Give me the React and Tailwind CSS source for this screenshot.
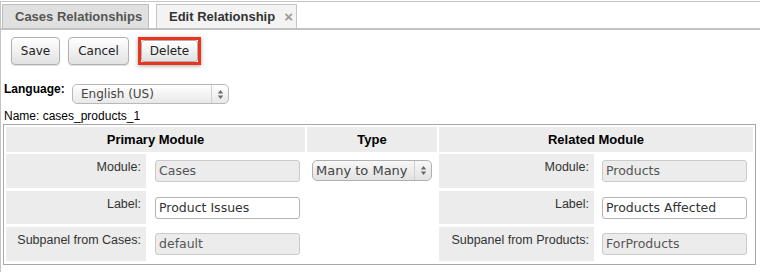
const sans = "font-['Liberation_Sans',Arial,sans-serif]";
const ui = "font-['DejaVu_Sans',sans-serif]";

function Arrows() {
  return (
    <svg width="7" height="11" viewBox="0 0 7 11">
      <path d="M3.5 1 L6.2 4.4 H0.8 Z M3.5 10 L6.2 6.6 H0.8 Z" fill="#6a6a6a" />
    </svg>
  );
}

function Btn({ w, children }) {
  return (
    <div
      className={`${w} h-[28px] rounded-[4px] border border-[#b0b0b0] bg-linear-to-b from-white to-[#e2e2e2] shadow-[0_1px_1px_rgba(0,0,0,0.12)] text-[12px] text-[#222] ${ui} flex items-center justify-center`}
    >
      {children}
    </div>
  );
}

function Label({ children }) {
  return (
    <div className="bg-[#ececec] text-right pr-[5px] pt-[6px] text-[12.5px] leading-[15px] text-[#333]">
      {children}
    </div>
  );
}

function Field({ value, disabled, left }) {
  return (
    <div className="bg-white">
      <div
        className={`${left} mt-[6px] w-[145px] h-[22px] rounded-[3px] border ${
          disabled ? "bg-[#ececec] border-[#cacaca] text-[#555]" : "bg-white border-[#b4b4b4] text-[#333]"
        } ${ui} text-[12.5px] pl-[3px] flex items-center`}
      >
        {value}
      </div>
    </div>
  );
}

const cols = "grid grid-cols-[140px_157px_130px_155px_157px] gap-x-[2px]";

export default function App() {
  return (
    <div className="w-[760px] h-[272px] bg-white pt-px overflow-hidden">
      <div className={`h-[271px] border-t border-l border-[#c4c4c4] ${sans}`}>
        {/* tabs */}
        <div className="h-[28px] flex items-end gap-[7px] pl-px border-b-2 border-[#c2c2c2]">
          <div className="w-[147px] h-[24px] border border-b-0 border-[#bdbdbd] bg-[#e0e0e0] flex items-center pl-[12px] text-[13px] font-bold text-[#555]">
            Cases Relationships
          </div>
          <div className="w-[141px] h-[24px] border border-b-0 border-[#c4c4c4] bg-[#f3f3f3] flex items-center pl-[12px] gap-[9px] text-[13px] font-bold text-[#333]">
            <span>Edit Relationship</span>
            <span className="text-[15px] font-bold text-[#999] leading-none">×</span>
          </div>
        </div>

        {/* buttons */}
        <div className="mt-[7px] ml-[10px] flex items-start">
          <Btn w="w-[49px]">Save</Btn>
          <div className="ml-[8px]">
            <Btn w="w-[61px]">Cancel</Btn>
          </div>
          <div className="ml-[9px] w-[63px] h-[28px] border-[3px] border-[#ea3420] shadow-[0_1px_4px_rgba(0,0,0,0.35)]">
            <div
              className={`w-[57px] h-[22px] rounded-[3px] border border-[#b0b0b0] bg-linear-to-b from-white to-[#e2e2e2] text-[12px] text-[#222] ${ui} flex items-center justify-center`}
            >
              Delete
            </div>
          </div>
        </div>

        {/* language */}
        <div className="mt-[17px] ml-[3px] flex items-start">
          <div className="w-[68px] text-[12px] leading-[14px] font-bold text-black">Language:</div>
          <div className="mt-[2px] w-[157px] h-[20px] rounded-[5px] border border-[#b8b8b8] bg-linear-to-b from-white to-[#e8e8e8] flex">
            <div className={`flex-1 pl-[8px] ${ui} text-[12px] text-[#444] flex items-center`}>English (US)</div>
            <div className="w-[17px] border-l border-[#d0d0d0] flex items-center justify-center">
              <Arrows />
            </div>
          </div>
        </div>

        {/* name */}
        <div className="mt-[5px] ml-[3px] text-[12px] leading-[14px] text-black">Name: cases_products_1</div>

        {/* table */}
        <div className="mt-px ml-[2px] w-[753px] border border-[#a8a8a8] p-[2px] pb-[3px] flex flex-col">
          <div className={`${cols} h-[25px] text-[13px] font-bold text-black`}>
            <div className="col-span-2 bg-[#ececec] flex items-center justify-center">Primary Module</div>
            <div className="bg-[#ececec] flex items-center justify-center">Type</div>
            <div className="col-span-2 bg-[#ececec] flex items-center justify-center">Related Module</div>
          </div>

          <div className={`${cols} h-[34px] mt-[2px]`}>
            <Label>Module:</Label>
            <Field value="Cases" disabled left="ml-[7px]" />
            <div className="bg-white">
              <div className="ml-[5px] mt-[6px] w-[120px] h-[21px] rounded-[5px] border border-[#b0b0b0] bg-linear-to-b from-[#f8f8f8] to-[#e2e2e2] flex">
                <div className={`flex-1 pl-[3px] ${ui} text-[13px] text-[#444] flex items-center`}>Many to Many</div>
                <div className="w-[17px] border-l border-[#cfcfcf] flex items-center justify-center">
                  <Arrows />
                </div>
              </div>
            </div>
            <Label>Module:</Label>
            <Field value="Products" disabled left="ml-[6px]" />
          </div>

          <div className={`${cols} h-[33px] mt-[3px]`}>
            <Label>Label:</Label>
            <Field value="Product Issues" left="ml-[7px]" />
            <div className="bg-white" />
            <Label>Label:</Label>
            <Field value="Products Affected" left="ml-[6px]" />
          </div>

          <div className={`${cols} h-[34px] mt-[3px]`}>
            <Label>Subpanel from Cases:</Label>
            <Field value="default" disabled left="ml-[7px]" />
            <div className="bg-white" />
            <Label>Subpanel from Products:</Label>
            <Field value="ForProducts" disabled left="ml-[6px]" />
          </div>
        </div>
      </div>
    </div>
  );
}
